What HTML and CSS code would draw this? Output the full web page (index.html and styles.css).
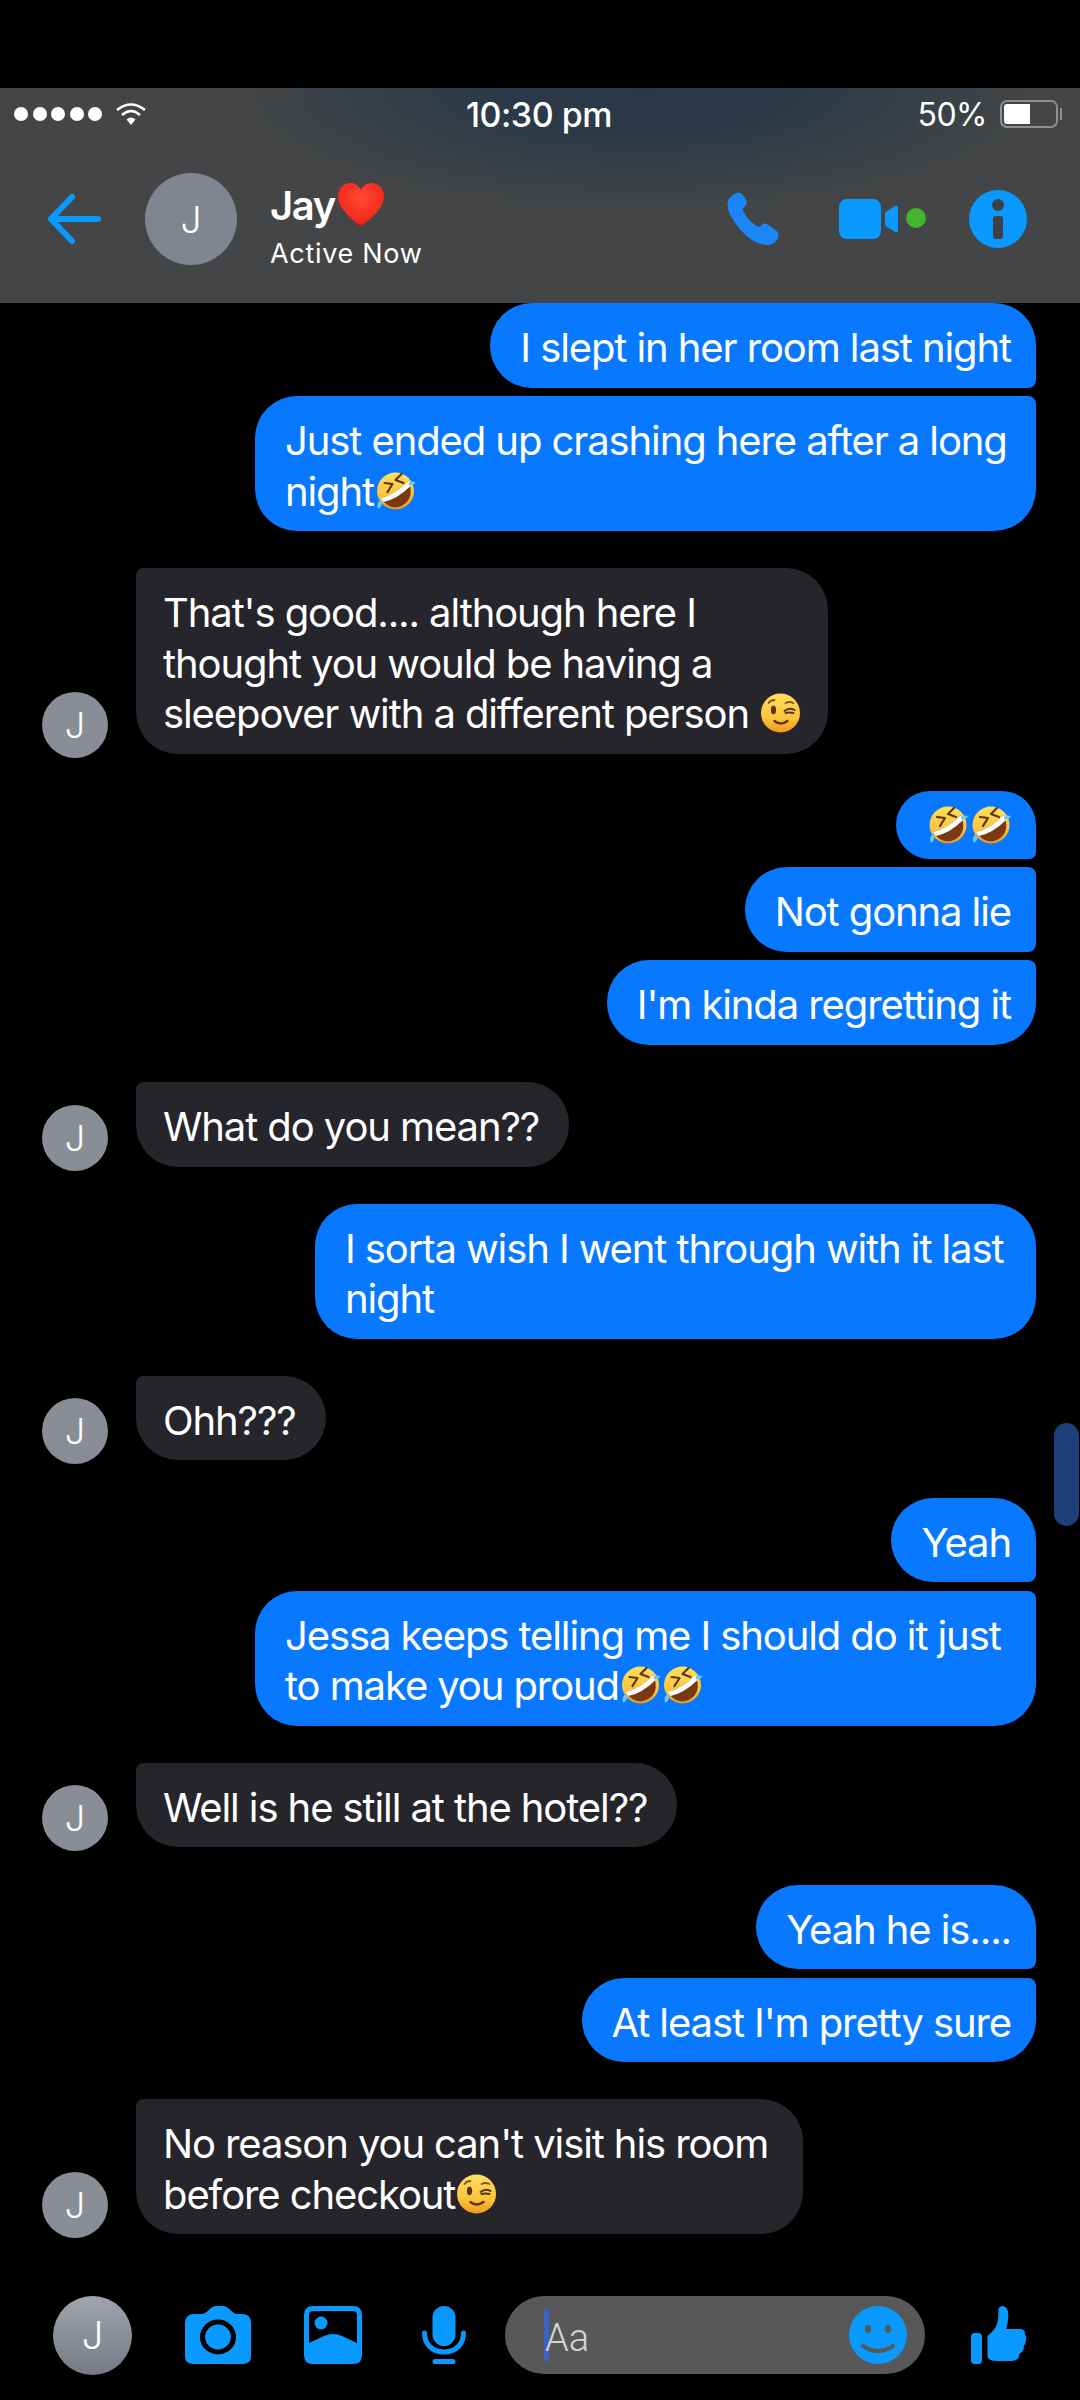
FILE: index.html
```html
<!DOCTYPE html>
<html lang="en">
<head>
    <meta charset="UTF-8">
    <meta name="viewport" content="width=device-width, initial-scale=1.0">
    <title>Jay</title>
    <link rel="stylesheet" href="styles.css">
</head>
<body>
    <svg class="defs" width="0" height="0">
        <defs>
            <linearGradient id="face" x1="0" y1="0" x2="0" y2="1">
                <stop offset="0" stop-color="#ffe060"/>
                <stop offset="0.65" stop-color="#fcc23a"/>
                <stop offset="1" stop-color="#ee981e"/>
            </linearGradient>
            <radialGradient id="red" cx="50%" cy="35%" r="70%">
                <stop offset="0" stop-color="#ff4a32"/>
                <stop offset="0.75" stop-color="#f2281c"/>
                <stop offset="1" stop-color="#b5120c"/>
            </radialGradient>
            <symbol id="rofl" viewBox="0 0 40 40">
                <circle cx="20" cy="20" r="18.500" fill="url(#face)"/>
                <path d="M5 27 Q19 24 33 10 Q40 28 26 35 Q14 40 5 27Z" fill="#7a3a10"/>
                <path d="M5 27 Q19 24 33 10 L35 15 Q22 28 8 31Z" fill="#fff"/>
                <path d="M9 12 L17 13 L12 21" fill="none" stroke="#5b3410" stroke-width="2.200" stroke-linecap="round" stroke-linejoin="round"/>
                <path d="M26 3 L20 9 L28 12" fill="none" stroke="#5b3410" stroke-width="2.200" stroke-linecap="round" stroke-linejoin="round"/>
                <path d="M40 11 Q38 15 33 14 Q33 9 40 11Z" fill="#6fc6f2"/>
                <path d="M3 38 Q0 33 5 29 Q9 33 3 38Z" fill="#6fc6f2"/>
            </symbol>
            <symbol id="wink" viewBox="0 0 40 40">
                <circle cx="20" cy="20" r="19.500" fill="url(#face)"/>
                <ellipse cx="13" cy="17" rx="2.600" ry="4.200" fill="#5b3410"/>
                <path d="M24 18 Q29 14 34 17 M25 20 Q29 19 33 20" fill="none" stroke="#5b3410" stroke-width="2" stroke-linecap="round"/>
                <path d="M8 10 Q10 7 14 7 M25 10 Q29 8 33 10" fill="none" stroke="#8a5316" stroke-width="1.800" stroke-linecap="round"/>
                <path d="M14 28 Q20 33 27 28" fill="none" stroke="#5b3410" stroke-width="2.400" stroke-linecap="round"/>
            </symbol>
        </defs>
    </svg>

    <div class="topgap"></div>

    <header class="header">
        <div class="status">
            <div class="status-left">
                <span class="signal"><i></i><i></i><i></i><i></i><i></i></span>
                <svg class="wifi" viewBox="0 0 30 24"><path d="M1 8 Q15 -3 29 8" fill="none" stroke="#fff" stroke-width="2.600"/><path d="M6 13 Q15 5 24 13" fill="none" stroke="#fff" stroke-width="2.600"/><path d="M10.500 17.500 Q15 13.500 19.500 17.500 L15 23Z" fill="#fff"/></svg>
            </div>
            <div class="status-time">10:30 pm</div>
            <div class="status-right">
                <span class="pct">50%</span>
                <span class="battery"><span class="battery-fill"></span></span>
                <span class="battery-tip"></span>
            </div>
        </div>
        <div class="nav">
            <svg class="back" viewBox="0 0 53 50"><path d="M24 3 L3 25 L24 47 M3 25 H50" fill="none" stroke="#0a99ff" stroke-width="6" stroke-linecap="round" stroke-linejoin="round"/></svg>
            <div class="avatar avatar-lg">J</div>
            <div class="who">
                <div class="name">Jay<svg class="heart" viewBox="0 0 48 46"><path d="M24 45 C14 36 1 27 1 14 C1 6 7 1 13.500 1 C18 1 22 3.500 24 8 C26 3.500 30 1 34.500 1 C41 1 47 6 47 14 C47 27 34 36 24 45Z" fill="url(#red)"/></svg></div>
                <div class="active">Active Now</div>
            </div>
            <div class="nav-icons">
                <svg class="phone" viewBox="0 0 52 54"><path d="M9 1 C12 0 15 2 17 5 L19 9 C20 11 19 13 17 15 L15 17 C17 23 22 29 29 34 C31 35 32 35 34 33 C36 31 38 31 41 33 L48 38 C51 40 52 43 50 47 C48 51 44 53 40 53 C30 53 18 45 10 34 C4 26 0 19 0 12 C0 7 4 3 9 1Z" fill="#1b86f7"/></svg>
                <svg class="video" viewBox="0 0 87 42"><rect x="0" y="1" width="42" height="40" rx="8" fill="#0a99ff"/><path d="M46 16 Q46 14 48 13 L56 8 Q59 7 59 10 V32 Q59 35 56 34 L48 29 Q46 28 46 26Z" fill="#0a99ff"/><circle cx="77" cy="20" r="10" fill="#44b62d"/></svg>
                <svg class="info" viewBox="0 0 58 58"><circle cx="29" cy="29" r="29" fill="#0a99ff"/><circle cx="29" cy="15" r="6" fill="#3f4244"/><rect x="24" y="26" width="10" height="23" rx="2.500" fill="#3f4244"/></svg>
            </div>
        </div>
    </header>

    <main class="chat">
        <div class="msg out first">I slept in her room last night</div>
        <div class="msg out last w781">Just ended up crashing here after a long<br>night<svg class="emoji"><use href="#rofl"/></svg></div>

        <div class="row new">
            <div class="avatar avatar-sm">J</div>
            <div class="msg in w692">That's good.... although here I<br>thought you would be having a<br>sleepover with a different person <svg class="emoji"><use href="#wink"/></svg></div>
        </div>

        <div class="msg out first new emoji-only"><svg class="emoji"><use href="#rofl"/></svg><svg class="emoji"><use href="#rofl"/></svg></div>
        <div class="msg out mid">Not gonna lie</div>
        <div class="msg out last">I'm kinda regretting it</div>

        <div class="row new">
            <div class="avatar avatar-sm">J</div>
            <div class="msg in">What do you mean??</div>
        </div>

        <div class="msg out new w721">I sorta wish I went through with it last<br>night</div>

        <div class="row new">
            <div class="avatar avatar-sm">J</div>
            <div class="msg in">Ohh???</div>
        </div>

        <div class="msg out first new">Yeah</div>
        <div class="msg out last w781">Jessa keeps telling me I should do it just<br>to make you proud<svg class="emoji"><use href="#rofl"/></svg><svg class="emoji"><use href="#rofl"/></svg></div>

        <div class="row new">
            <div class="avatar avatar-sm">J</div>
            <div class="msg in">Well is he still at the hotel??</div>
        </div>

        <div class="msg out first new">Yeah he is....</div>
        <div class="msg out last">At least I'm pretty sure</div>

        <div class="row new">
            <div class="avatar avatar-sm">J</div>
            <div class="msg in w667">No reason you can't visit his room<br>before checkout<svg class="emoji"><use href="#wink"/></svg></div>
        </div>
    </main>

    <div class="scroll-thumb"></div>

    <footer class="composer">
        <div class="avatar avatar-me">J</div>
        <svg class="ic-camera" viewBox="0 0 64 58" preserveAspectRatio="none"><path d="M9 8 H16 Q19 8 21 6 L24 3 Q27 0 30 0 H37 Q40 0 43 3 L46 6 Q48 8 51 8 H55 Q64 8 64 17 V50 Q64 58 56 58 H8 Q0 58 0 50 V17 Q0 8 9 8Z" fill="#0a99ff"/><circle cx="32" cy="31" r="15" fill="none" stroke="#000" stroke-width="5"/></svg>
        <svg class="ic-photo" viewBox="0 0 58 58"><path fill-rule="evenodd" d="M9 0 H49 Q58 0 58 9 V49 Q58 58 49 58 H9 Q0 58 0 49 V9 Q0 0 9 0Z M9 5 Q5 5 5 9 V37 L20 30 Q29 26 38 30 L53 37 V9 Q53 5 49 5Z" fill="#0a99ff"/><circle cx="17" cy="17" r="6.500" fill="#0a99ff"/></svg>
        <svg class="ic-mic" viewBox="0 0 44 58"><rect x="10.500" y="0" width="23" height="40" rx="11.500" fill="#0a99ff"/><path d="M2.500 27 C2.500 38 10 46 22 46 C34 46 41.500 38 41.500 27" fill="none" stroke="#0a99ff" stroke-width="5" stroke-linecap="round"/><rect x="10.500" y="53" width="23" height="5" rx="2.500" fill="#0a99ff"/></svg>
        <div class="input">
            <span class="caret"></span>
            <span class="placeholder">Aa</span>
            <svg class="ic-smile" viewBox="0 0 58 58"><circle cx="29" cy="29" r="29" fill="#0a99ff"/><ellipse cx="19" cy="23" rx="3.200" ry="4" fill="#585858"/><ellipse cx="39" cy="23" rx="3.200" ry="4" fill="#585858"/><path d="M14 40 Q29 50 44 40" fill="none" stroke="#585858" stroke-width="4" stroke-linecap="round"/></svg>
        </div>
        <svg class="ic-thumb" viewBox="0 0 51 58" preserveAspectRatio="none"><rect x="0" y="27" width="10" height="31" rx="3.500" fill="#0a99ff"/><path d="M15 30 Q22 24 24 17 C25 12 25 8 25 3 Q26 0 29 0 Q34 1 34 9 Q34 16 32 23 H45 Q50 24 49 28 Q51 31 50 34 Q50 38 48 40 Q49 45 44 48 Q44 54 38 55 H24 Q15 55 15 50Z" fill="#0a99ff"/></svg>
    </footer>
</body>
</html>
```

FILE: styles.css
```css
* { box-sizing: border-box; }
html, body { margin: 0; padding: 0; }
body { width: 1080px; height: 2400px; background: #000; color: #fff; font-family: Inter, "Liberation Sans", sans-serif; position: relative; overflow: hidden; }
.defs { position: absolute; }
.topgap { height: 88px; }

/* header */
.header { height: 215px; background: radial-gradient(ellipse 400px 120px at 640px 0, #293848 0%, #2c3a48 40%, #434546 100%), #434546; }
.status { height: 52px; padding: 0 18px 0 14px; display: flex; align-items: center; }
.status-left { display: flex; align-items: center; gap: 13px; width: 452px; }
.signal { display: flex; gap: 4.500px; }
.signal i { width: 14px; height: 14px; border-radius: 50%; background: #fff; }
.wifi { width: 32px; height: 24px; }
.status-time { font-size: 34px; font-weight: 500; letter-spacing: -0.5px; }
.status-right { display: flex; align-items: center; margin-left: auto; }
.pct { font-size: 32px; letter-spacing: -0.5px; margin-right: 13px; }
.battery { width: 58px; height: 28px; border: 2px solid #8d9194; border-radius: 7px; padding: 2px; display: block; }
.battery-fill { display: block; width: 26px; height: 100%; background: #fff; border-radius: 3px 0 0 3px; }
.battery-tip { width: 2px; height: 12px; background: #8d9194; margin-left: 2px; }

.nav { display: flex; align-items: center; height: 163px; padding: 0 53px 5px 48px; }
.back { width: 53px; height: 50px; margin-right: 44px; }
.avatar { border-radius: 50%; background: #81858f; display: flex; align-items: center; justify-content: center; flex: none; color: #fff; }
.avatar-lg { width: 92px; height: 92px; font-size: 37px; font-weight: 300; }
.who { margin-left: 33px; margin-top: 14px; }
.name { display: flex; align-items: center; height: 46px; font-size: 40px; font-weight: 600; letter-spacing: -1.4px; }
.heart { width: 48px; height: 46px; margin-left: 2px; }
.active { font-size: 27px; line-height: 32px; letter-spacing: 0.7px; margin-top: 10px; }
.nav-icons { margin-left: auto; display: flex; align-items: center; }
.phone { width: 53px; height: 54px; margin-right: 59px; }
.video { width: 87px; height: 42px; margin-right: 43px; }
.info { width: 58px; height: 58px; }

/* messages */
.chat { display: flex; flex-direction: column; align-items: flex-end; padding: 0 44px 0 42px; }
.msg { font-size: 40px; line-height: 50.500px; padding: 20px 25px 14px 30px; border-radius: 42px; letter-spacing: -1.1px; margin-top: 8.500px; white-space: nowrap; }
.chat > .msg:first-child { margin-top: 0; }
.out { background: #0879ff; }
.in { background: #26252b; margin-top: 0; padding: 20px 30px 14px 27px; border-top-left-radius: 8px; }
.out.first { border-bottom-right-radius: 8px; }
.out.mid { border-top-right-radius: 8px; border-bottom-right-radius: 8px; }
.out.last { border-top-right-radius: 8px; }
.new { margin-top: 37.200px; }
.row { align-self: flex-start; display: flex; align-items: flex-end; gap: 28px; }
.avatar-sm { width: 66px; height: 66px; font-size: 36px; font-weight: 300; background: #898d96; margin-bottom: -4px; }
.emoji { width: 41px; height: 40px; vertical-align: -5px; margin-left: 1px; }
.emoji-only { height: 68px; width: 140px; padding: 0 25px 0 32px; display: flex; align-items: center; gap: 3px; }
.emoji-only .emoji { width: 40px; flex: none; margin-left: 0; }

.w692 { width: 692px; }
.w721 { width: 721px; }
.w781 { width: 781px; }
.w667 { width: 667px; }

.scroll-thumb { position: absolute; left: 1054px; top: 1423px; width: 25px; height: 103px; border-radius: 13px; background: #1f3f7a; }

/* composer */
.composer { position: absolute; left: 0; right: 0; top: 2295px; height: 80px; display: flex; align-items: center; padding-left: 53px; }
.avatar-me { width: 79px; height: 79px; font-size: 38px; font-weight: 300; background: linear-gradient(#a0a4ae, #767a84); margin-right: 53px; }
.ic-camera { width: 66px; height: 58px; margin-right: 53px; }
.ic-photo { width: 58px; height: 58px; margin-right: 60px; }
.ic-mic { width: 44px; height: 58px; margin-right: 39px; }
.input { width: 420px; height: 78px; background: #585858; border-radius: 39px; display: flex; align-items: center; padding: 0 18px 0 39px; margin-right: 46px; }
.caret { width: 5px; height: 52px; background: #3a62c8; }
.placeholder { font-family: Roboto, sans-serif; font-weight: 300; font-size: 38px; color: #d4d4d4; margin-left: -4px; margin-top: 6px; }
.ic-smile { width: 58px; height: 58px; margin-left: auto; }
.ic-thumb { width: 56px; height: 58px; }
```
